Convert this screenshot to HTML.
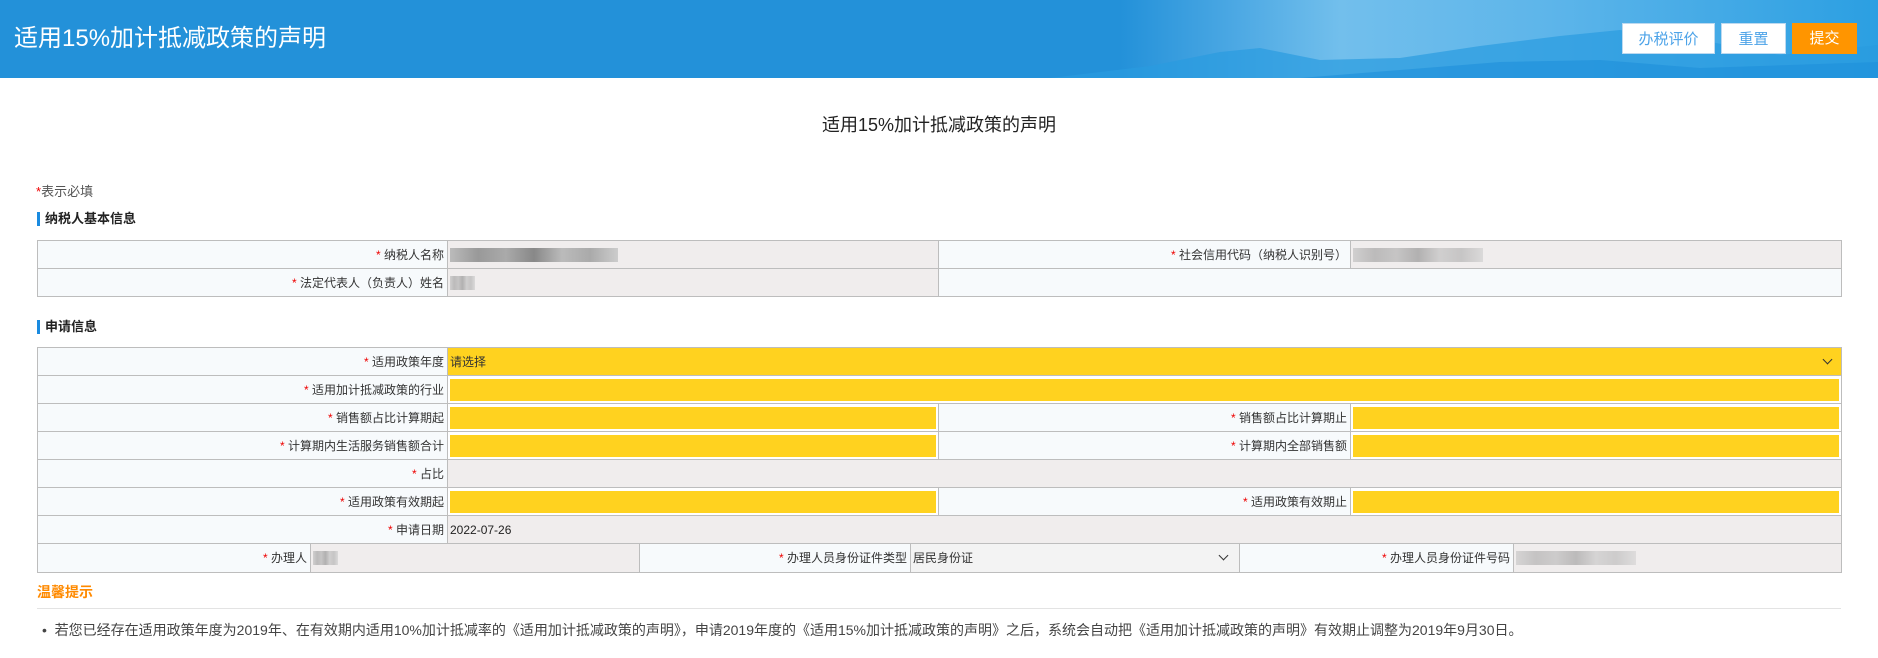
<!DOCTYPE html>
<html><head><meta charset="utf-8"><style>
*{box-sizing:border-box;margin:0;padding:0}
body{width:1878px;height:658px;overflow:hidden;background:#fff;font-family:"Liberation Sans","Noto Sans CJK SC",sans-serif;font-size:12px;color:#333;position:relative}
.hd{position:absolute;left:0;top:0;width:1878px;height:78px;background:linear-gradient(90deg,#2391d9 0,#2391d9 1120px,#4aa7e3 1230px,#72bfec 1340px,#5db5ea 1550px,#2b9fe2 1878px);overflow:hidden}
.hd h1{position:absolute;left:14px;top:22px;font-size:24px;font-weight:normal;color:#fff;line-height:34px}
.mt{position:absolute;bottom:0;left:0}
.btn{position:absolute;top:23px;height:31px;line-height:31px;text-align:center;font-size:15px}
.w{background:#fff;color:#4da3e8;border:1px solid #bcd9f0}
.o{background:#ff9500;color:#fff}
.abs{position:absolute}
table{position:absolute;border-collapse:collapse;table-layout:fixed}
td{border:1px solid #bdbdbd;height:28px;padding:0 4px;white-space:nowrap;overflow:hidden}
td.l{background:#f7fafc;text-align:right;padding-right:3px}
td.v{background:#f0eded;padding:0 2px}
td.y{background:#fff;padding:0 2px}
td.y div{background:#ffd21f;height:22px}
td.s{background:#ffd21f;padding:0 2px;position:relative}
.r{color:#e00}
.sec{position:absolute;left:37px;font-weight:bold;font-size:13px;border-left:3px solid #1a8be0;padding-left:5px;line-height:14px;color:#222}
.blur{display:inline-block;height:14px;vertical-align:middle;background:linear-gradient(90deg,#bbb,#999,#aaa,#888,#bbb,#aaa,#ccc)}
.chev{position:absolute;right:10px;top:8px;width:7px;height:7px;border-right:1px solid #333;border-bottom:1px solid #333;transform:rotate(45deg)}
</style></head><body>
<div class="hd">
<svg class="mt" width="1878" height="78"><path d="M1050 78 L1150 66 L1220 52 L1260 48 L1320 60 L1400 58 L1480 46 L1560 36 L1620 30 L1700 40 L1780 55 L1878 45 L1878 78Z" fill="#2a9be0" opacity=".7"/><path d="M1300 78 L1400 70 L1500 62 L1600 60 L1700 68 L1878 62 L1878 78Z" fill="#1e8fdb" opacity=".6"/></svg>
<h1>适用15%加计抵减政策的声明</h1>
<div class="btn w" style="left:1622px;width:93px">办税评价</div>
<div class="btn w" style="left:1721px;width:65px">重置</div>
<div class="btn o" style="left:1792px;width:65px">提交</div>
</div>
<div class="abs" style="left:0;width:1878px;top:111px;text-align:center;font-size:18px;color:#222">适用15%加计抵减政策的声明</div>
<div class="abs" style="left:36px;top:181px;color:#555;font-size:13px"><span class="r">*</span>表示必填</div>
<div class="sec" style="top:212px">纳税人基本信息</div>
<table style="left:37px;top:240px;width:1804px">
<colgroup><col style="width:410px"><col style="width:491px"><col style="width:412px"><col style="width:491px"></colgroup>
<tr><td class="l"><span class="r">*</span> 纳税人名称</td><td class="v"><span class="blur" style="width:168px"></span></td><td class="l"><span class="r">*</span> 社会信用代码（纳税人识别号）</td><td class="v"><span class="blur" style="width:130px;opacity:.6"></span></td></tr>
<tr><td class="l"><span class="r">*</span> 法定代表人（负责人）姓名</td><td class="v"><span class="blur" style="width:25px;opacity:.6"></span></td><td class="l" colspan="2"></td></tr>
</table>
<div class="sec" style="top:320px">申请信息</div>
<table style="left:37px;top:347px;width:1804px">
<colgroup><col style="width:410px"><col style="width:491px"><col style="width:412px"><col style="width:491px"></colgroup>
<tr><td class="l"><span class="r">*</span> 适用政策年度</td><td class="s" colspan="3">请选择<span class="chev"></span></td></tr>
<tr><td class="l"><span class="r">*</span> 适用加计抵减政策的行业</td><td class="y" colspan="3"><div></div></td></tr>
<tr><td class="l"><span class="r">*</span> 销售额占比计算期起</td><td class="y"><div></div></td><td class="l"><span class="r">*</span> 销售额占比计算期止</td><td class="y"><div></div></td></tr>
<tr><td class="l"><span class="r">*</span> 计算期内生活服务销售额合计</td><td class="y"><div></div></td><td class="l"><span class="r">*</span> 计算期内全部销售额</td><td class="y"><div></div></td></tr>
<tr><td class="l"><span class="r">*</span> 占比</td><td class="v" colspan="3"></td></tr>
<tr><td class="l"><span class="r">*</span> 适用政策有效期起</td><td class="y"><div></div></td><td class="l"><span class="r">*</span> 适用政策有效期止</td><td class="y"><div></div></td></tr>
<tr><td class="l"><span class="r">*</span> 申请日期</td><td class="v" colspan="3" style="color:#222">2022-07-26</td></tr>
</table>
<table style="left:37px;top:544px;width:1804px">
<colgroup><col style="width:273px"><col style="width:329px"><col style="width:271px"><col style="width:329px"><col style="width:274px"><col style="width:328px"></colgroup>
<tr><td class="l" style="border-top:0"><span class="r">*</span> 办理人</td><td class="v" style="border-top:0"><span class="blur" style="width:25px;opacity:.6"></span></td><td class="l" style="border-top:0"><span class="r">*</span> 办理人员身份证件类型</td><td class="v" style="border-top:0;position:relative;background:#f3f3f3">居民身份证<span class="chev" style="right:12px"></span></td><td class="l" style="border-top:0"><span class="r">*</span> 办理人员身份证件号码</td><td class="v" style="border-top:0"><span class="blur" style="width:120px;opacity:.5"></span></td></tr>
</table>
<div class="abs" style="left:37px;top:582px;color:#ff8a00;font-weight:bold;font-size:14px">温馨提示</div>
<div class="abs" style="left:37px;top:608px;width:1804px;border-top:1px solid #e3e3e3"></div>
<div class="abs" style="left:42px;top:620px;color:#444;font-size:14px">•&nbsp; 若您已经存在适用政策年度为2019年、在有效期内适用10%加计抵减率的《适用加计抵减政策的声明》，申请2019年度的《适用15%加计抵减政策的声明》之后，系统会自动把《适用加计抵减政策的声明》有效期止调整为2019年9月30日。</div>
</body></html>
